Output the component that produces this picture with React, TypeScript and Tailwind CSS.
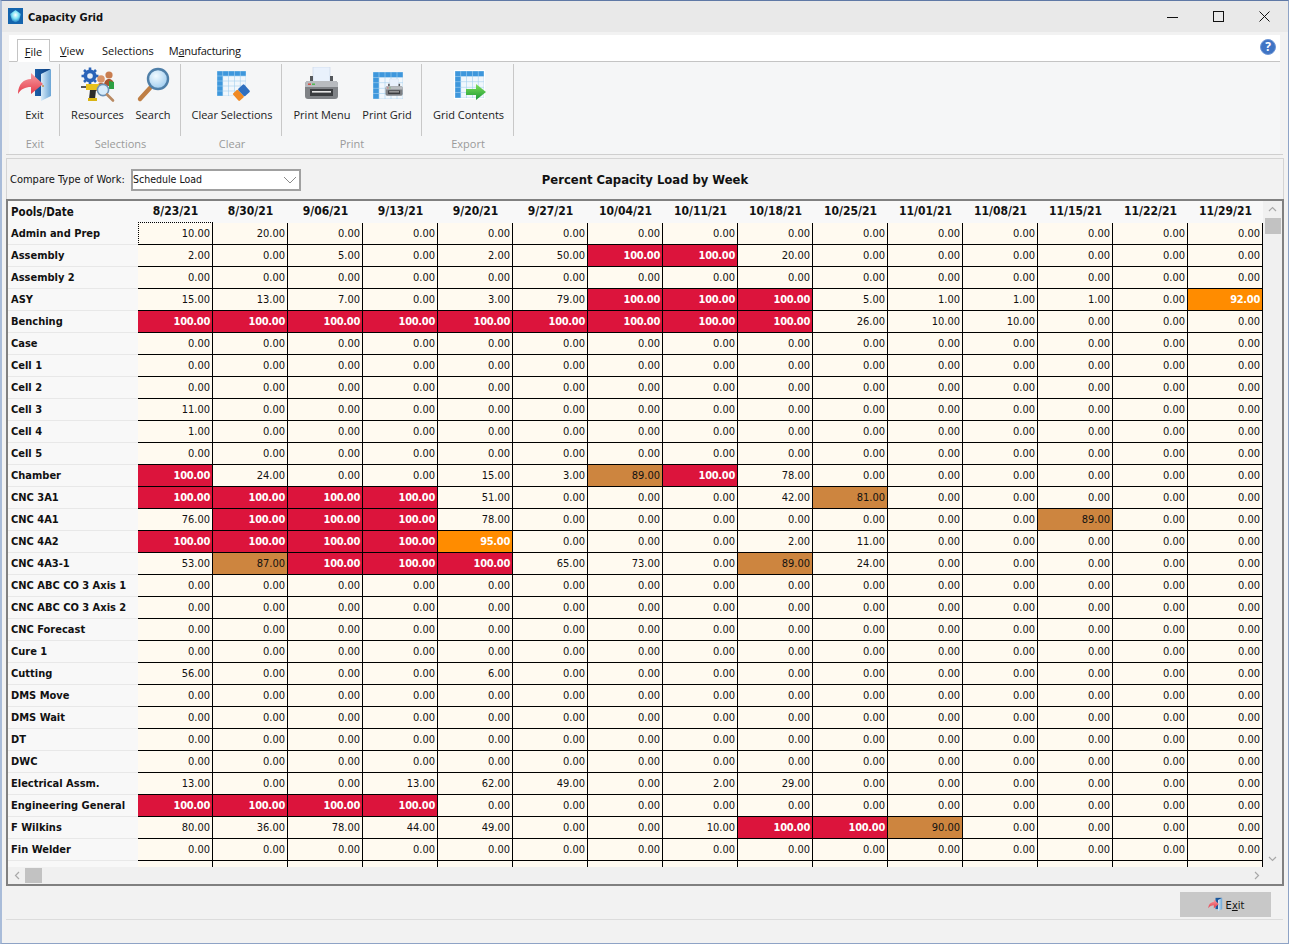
import React from "react";

const DATES = ["8/23/21","8/30/21","9/06/21","9/13/21","9/20/21","9/27/21","10/04/21","10/11/21","10/18/21","10/25/21","11/01/21","11/08/21","11/15/21","11/22/21","11/29/21"];
const Z: number[] = [];
const ROWS: [string, number[]][] = [
  ["Admin and Prep", [10,20]],
  ["Assembly", [2,0,5,0,2,50,100,100,20]],
  ["Assembly 2", Z],
  ["ASY", [15,13,7,0,3,79,100,100,100,5,1,1,1,0,92]],
  ["Benching", [100,100,100,100,100,100,100,100,100,26,10,10]],
  ["Case", Z],
  ["Cell 1", Z],
  ["Cell 2", Z],
  ["Cell 3", [11]],
  ["Cell 4", [1]],
  ["Cell 5", Z],
  ["Chamber", [100,24,0,0,15,3,89,100,78]],
  ["CNC 3A1", [100,100,100,100,51,0,0,0,42,81]],
  ["CNC 4A1", [76,100,100,100,78,0,0,0,0,0,0,0,89]],
  ["CNC 4A2", [100,100,100,100,95,0,0,0,2,11]],
  ["CNC 4A3-1", [53,87,100,100,100,65,73,0,89,24]],
  ["CNC ABC CO 3 Axis 1", Z],
  ["CNC ABC CO 3 Axis 2", Z],
  ["CNC Forecast", Z],
  ["Cure 1", Z],
  ["Cutting", [56,0,0,0,6]],
  ["DMS Move", Z],
  ["DMS Wait", Z],
  ["DT", Z],
  ["DWC", Z],
  ["Electrical Assm.", [13,0,0,13,62,49,0,2,29]],
  ["Engineering General", [100,100,100,100]],
  ["F Wilkins", [80,36,78,44,49,0,0,10,100,100,90]],
  ["Fin Welder", Z],
];

const cellTone = (v: number) => {
  if (v >= 100) return "bg-[#dc143c] text-white font-bold tracking-[-0.3px]";
  if (v > 90) return "bg-[#ff8c00] text-white font-bold tracking-[-0.3px]";
  if (v > 80) return "bg-[#cd853f] text-[#111]";
  return "bg-[#fffaf0] text-[#111]";
};

const ExitIcon = ({ s = 36, id = "a" }: { s?: number; id?: string }) => (
  <svg width={s} height={s} viewBox="0 0 36 36">
    <defs>
      <linearGradient id={"dr" + id} x1="0" y1="0" x2="1" y2="0"><stop offset="0" stopColor="#1d5fa8" /><stop offset="1" stopColor="#0d3f80" /></linearGradient>
      <linearGradient id={"dp" + id} x1="0" y1="0" x2="1" y2="0"><stop offset="0" stopColor="#d8ebf8" /><stop offset="1" stopColor="#6aa5d6" /></linearGradient>
      <linearGradient id={"ar" + id} x1="0" y1="0" x2="0" y2="1"><stop offset="0" stopColor="#f7a0a4" /><stop offset="1" stopColor="#e53b4a" /></linearGradient>
    </defs>
    <rect x="18" y="2" width="15" height="27" fill={`url(#dr${id})`} />
    <path d="M24 7 L34 2 V29 L24 34 Z" fill={`url(#dp${id})`} />
    <path d="M1 27 C1 17 7 12 14 12 V6 L26 17 L14 27 V20 C8 20 4 22 1 27 Z" fill={`url(#ar${id})`} />
    <circle cx="26" cy="19" r="0.9" fill="#c08a3a" />
  </svg>
);

const ResourcesIcon = () => (
  <svg width="36" height="36" viewBox="0 0 36 36">
    <g fill="#2a63b8">
      <circle cx="10" cy="9" r="6.5" />
      <g stroke="#2a63b8" strokeWidth="2.6">
        <path d="M10 0.5V17.5M1.5 9H18.5M4 3L16 15M16 3L4 15" />
      </g>
    </g>
    <circle cx="10" cy="9" r="2.8" fill="#e6eef8" />
    <circle cx="29" cy="8" r="3.6" fill="#c97d4f" />
    <path d="M24 19c0-5 2-7 5-7s5 2 5 7z" fill="#a8552f" />
    <path d="M29 14l5 1v7h-5z" fill="#2ea043" />
    <circle cx="21" cy="12" r="3.8" fill="#d99468" />
    <path d="M15 24c0-6 3-8 6-8s6 2 6 8z" fill="#b9663c" />
    <rect x="1" y="19" width="6" height="2" fill="#555" />
    <path d="M6 17h13v6H6z" fill="#e7c21d" />
    <path d="M10 23h6l-1 9h-6z" fill="#2c2c2c" />
    <rect x="8" y="31" width="9" height="3" fill="#d9b414" />
    <circle cx="23" cy="23" r="5.6" fill="#d7ecfb" stroke="#6d93b8" strokeWidth="1.6" />
    <path d="M27 27.5L33 33.5" stroke="#b98a62" strokeWidth="2.6" strokeLinecap="round" />
  </svg>
);

const SearchIcon = () => (
  <svg width="36" height="36" viewBox="0 0 36 36">
    <defs>
      <radialGradient id="gl" cx="0.4" cy="0.35" r="0.8"><stop offset="0" stopColor="#f2fbff" /><stop offset="1" stopColor="#8fc3ec" /></radialGradient>
    </defs>
    <path d="M5 32L15 21" stroke="#bf7f45" strokeWidth="4.4" strokeLinecap="round" />
    <circle cx="23" cy="12" r="10" fill="url(#gl)" stroke="#4f7fa8" strokeWidth="2.4" />
  </svg>
);

const Table = ({ x, y, w, h, cols = 5, rows = 5 }: { x: number; y: number; w: number; h: number; cols?: number; rows?: number }) => {
  const cw = w / cols;
  const rh = h / rows;
  const cells: React.ReactNode[] = [];
  for (let r = 0; r < rows; r++) {
    for (let c = 0; c < cols; c++) {
      const head = r === 0 || c === 0;
      cells.push(
        <rect key={r + "-" + c} x={x + c * cw + 0.3} y={y + r * rh + 0.3} width={cw - 0.6} height={rh - 0.6} fill={head ? "#3e97dc" : "#f1f7fc"} />
      );
    }
  }
  return (
    <g>
      <rect x={x} y={y} width={w} height={h} fill="#a6d0ef" />
      {cells}
    </g>
  );
};

const ClearIcon = () => (
  <svg width="36" height="36" viewBox="0 0 36 36">
    <Table x={3} y={4} w={29} h={25} />
    <g transform="rotate(-42 27 26)">
      <rect x="20" y="21" width="7" height="10" rx="1.2" fill="#f08a24" />
      <rect x="27" y="21" width="8" height="10" rx="1.2" fill="#2f6fc0" />
    </g>
  </svg>
);

const PrinterShape = ({ k = 1 }: { k?: number }) => (
  <g transform={`scale(${k})`}>
    <path d="M9 0H26V16H9Z" fill="#e9f1fc" stroke="#c8d4e6" strokeWidth="0.6" />
    <path d="M6 9H9V16H6ZM26 9H29V16H26Z" fill="#55585c" />
    <path d="M4 14H31Q34 14 34 18V29Q34 32 31 32H4Q1 32 1 29V18Q1 14 4 14Z" fill="#7f8286" />
    <path d="M1 18Q1 14 4 14H31Q34 14 34 18V20H1Z" fill="#b8bbbf" />
    <rect x="4" y="16.500" width="3" height="1.400" fill="#d84a3c" />
    <rect x="8" y="16.500" width="3" height="1.400" fill="#49b84a" />
    <rect x="6" y="22" width="23" height="7" fill="#3b3d40" />
    <rect x="8" y="24" width="19" height="1.600" fill="#e6e6e6" />
  </g>
);

const PrinterIcon = () => (
  <svg width="36" height="36" viewBox="0 0 36 36"><PrinterShape /></svg>
);

const PrintGridIcon = () => (
  <svg width="36" height="36" viewBox="0 0 36 36">
    <Table x={4} y={5} w={30} h={27} />
    <g transform="translate(16 12)"><PrinterShape k={0.52} /></g>
  </svg>
);

const ExportIcon = () => (
  <svg width="36" height="36" viewBox="0 0 36 36">
    <defs>
      <linearGradient id="gr" x1="0" y1="0" x2="0" y2="1"><stop offset="0" stopColor="#7fe05a" /><stop offset="1" stopColor="#1c9a36" /></linearGradient>
    </defs>
    <rect x="3" y="3" width="31" height="29" fill="#ffffff" />
    <Table x={4} y={4} w={29} h={27} />
    <path d="M15 22H25V17L35 25L25 33V28H15Z" fill="url(#gr)" />
  </svg>
);

const RibbonBtn = ({ w, label, icon }: { w: number; label: string; icon: React.ReactNode }) => (
  <div className="flex flex-col items-center shrink-0" style={{ width: w }}>
    <div className="h-[41px] flex items-center justify-center">{icon}</div>
    <div className="text-[11px] leading-[16px] mt-[2px] text-[#222] whitespace-nowrap">{label}</div>
  </div>
);

const Group = ({ w, pl, lp = 0, label, children }: { w: number; pl: number; lp?: number; label: string; children: React.ReactNode }) => (
  <div className="flex flex-col shrink-0 h-full" style={{ width: w }}>
    <div className="h-[74px] border-r border-[#c8c8c8] flex mt-[2px]" style={{ paddingLeft: pl }}>{children}</div>
    <div className="flex-1 flex items-center justify-center text-[11px] text-[#9a9a9a] pb-[2px]" style={{ paddingLeft: lp }}>{label}</div>
  </div>
);

const Chevron = ({ d }: { d: string }) => (
  <svg width="9" height="9" viewBox="0 0 9 9"><path d={d} fill="none" stroke="#a8a8a8" strokeWidth="1.2" /></svg>
);

export default function App() {
  const tahoma = { fontFamily: '"DejaVu Sans Condensed","DejaVu Sans",sans-serif' };
  return (
    <div className="w-[1289px] h-[944px] bg-[#f2f2f2] border-t border-t-[#5f79a6] border-b border-b-[#8ea3c6] border-l-2 border-l-[#a9bcd9] border-r border-r-[#8ea3c6] flex flex-col overflow-hidden text-[#111]" style={{ fontFamily: '"Open Sans","Noto Sans",sans-serif' }}>
      {/* title bar */}
      <div className="h-[31px] shrink-0 bg-[#e9e9e9] flex items-center">
        <div className="ml-[6px] w-[15px] h-[16px] mb-[1px] bg-[#1464ad] flex items-center justify-center">
          <svg width="15" height="16" viewBox="0 0 15 16">
            <defs><radialGradient id="tb" cx="0.5" cy="0.4" r="0.6"><stop offset="0" stopColor="#ffffff" /><stop offset="0.5" stopColor="#7fe3f5" /><stop offset="1" stopColor="#1a78c0" /></radialGradient></defs>
            <path d="M7.500 2L13 6L11 12.500L7.500 14.500L4 12.500L2 6Z" fill="url(#tb)" />
          </svg>
        </div>
        <div className="ml-[5px] mt-[3px] text-[11px] font-bold" style={tahoma}>Capacity Grid</div>
        <div className="ml-auto flex items-center h-full">
          <div className="w-[46px] flex justify-center"><svg width="11" height="11" viewBox="0 0 11 11"><path d="M0 6.500H11" stroke="#111" strokeWidth="1" /></svg></div>
          <div className="w-[46px] flex justify-center"><svg width="11" height="11" viewBox="0 0 11 11"><rect x="0.500" y="0.500" width="10" height="10" fill="none" stroke="#111" strokeWidth="1" /></svg></div>
          <div className="w-[46px] flex justify-center mr-[1px]"><svg width="11" height="11" viewBox="0 0 11 11"><path d="M0.500 0.500L10.500 10.500M10.500 0.500L0.500 10.500" stroke="#111" strokeWidth="1" /></svg></div>
        </div>
      </div>

      {/* tab strip */}
      <div className="h-[27px] shrink-0 mt-[3px] ml-[7px] w-[1271px] bg-white border-b border-[#c4c4c4] flex items-end pl-[8px] relative text-[11px]">
        <div className="h-[23px] w-[33px] border border-[#c4c4c4] border-b-white -mb-[1px] bg-white flex items-center justify-center pt-[3px]"><span><u>F</u>ile</span></div>
        <div className="h-[22px] ml-[10px] flex items-center pt-[2px]"><span><u>V</u>iew</span></div>
        <div className="h-[22px] ml-[18px] flex items-center pt-[2px]"><span>Selections</span></div>
        <div className="h-[22px] ml-[15px] flex items-center pt-[2px] tracking-[-0.25px]"><span>M<u>a</u>nufacturing</span></div>
        <div className="absolute right-[4px] top-[4px] w-[16px] h-[16px] rounded-full bg-[#3f74c4] border border-[#6f97d6] text-white text-[12px] font-bold flex items-center justify-center leading-none">?</div>
      </div>

      {/* ribbon */}
      <div className="h-[92px] shrink-0 ml-[7px] w-[1271px] bg-[#f5f6f7] flex pl-[1px]">
        <Group w={50} pl={0} label="Exit"><RibbonBtn w={49} label="Exit" icon={<ExitIcon />} /></Group>
        <Group w={121} pl={6} lp={0} label="Selections">
          <RibbonBtn w={63} label="Resources" icon={<ResourcesIcon />} />
          <RibbonBtn w={48} label="Search" icon={<SearchIcon />} />
        </Group>
        <Group w={101} pl={1} lp={1} label="Clear"><RibbonBtn w={100} label="Clear Selections" icon={<ClearIcon />} /></Group>
        <Group w={140} pl={7} label="Print">
          <RibbonBtn w={66} label="Print Menu" icon={<PrinterIcon />} />
          <RibbonBtn w={64} label="Print Grid" icon={<PrintGridIcon />} />
        </Group>
        <Group w={92} pl={1} lp={0} label="Export"><RibbonBtn w={91} label="Grid Contents" icon={<ExportIcon />} /></Group>
      </div>
      <div className="h-[1px] shrink-0 ml-[4px] w-[1277px] bg-[#cfcfcf]" />

      {/* selector panel */}
      <div className="h-[41px] shrink-0 mt-[3px] ml-[4px] w-[1278px] border border-[#d4d4d4] border-b-0 bg-[#f2f2f2] flex items-center relative">
        <span className="ml-[3px] mt-[2px] text-[11px] whitespace-nowrap" style={tahoma}>Compare Type of Work:</span>
        <div className="absolute left-[124px] top-[10px] w-[170px] h-[22px] border-2 border-[#a0a0a0] bg-white flex items-center text-[10.5px]" style={tahoma}>
          Schedule Load
          <svg className="absolute right-[2px] top-[4px]" width="14" height="10" viewBox="0 0 14 10"><path d="M1 2L7 8L13 2" fill="none" stroke="#8a8a8a" strokeWidth="1" /></svg>
        </div>
        <div className="absolute left-0 right-0 top-[11px] text-center text-[12.9px] font-bold" style={tahoma}>Percent Capacity Load by Week</div>
      </div>

      {/* grid */}
      <div className="h-[687px] shrink-0 ml-[4px] w-[1278px] border-2 border-[#808080] flex flex-col bg-[#f2f2f2] text-[11px]" style={tahoma}>
        <div className="flex h-[666px] shrink-0 overflow-hidden">
          <div className="w-[1255px] shrink-0 overflow-hidden">
            <div className="flex h-[22px] bg-[#f8f8f8]">
              <div className="w-[130px] shrink-0 pl-[3px] pt-[1px] flex items-center font-bold text-[11.5px]">Pools/Date</div>
              {DATES.map((d) => (
                <div key={d} className="w-[75px] shrink-0 flex items-center justify-center pb-[2px] font-bold text-[12px]">{d}</div>
              ))}
            </div>
            {ROWS.map(([name, vals], r) => (
              <div key={name} className="flex h-[22px]">
                <div className="w-[130px] shrink-0 pl-[3px] pt-[2px] flex items-center font-bold bg-[#f8f8f8] border-b border-[#e8e8e8] whitespace-nowrap">{name}</div>
                {DATES.map((d, c) => {
                  const v = vals[c] ?? 0;
                  const focus = r === 0 && c === 0;
                  return (
                    <div key={d} className={`w-[75px] shrink-0 flex items-center justify-end pr-[2px] pt-[2px] relative border-r border-b border-black ${cellTone(v)}`}>
                      {v.toFixed(2)}
                      {focus && <div className="absolute -left-[0px] -top-[1px] -right-[1px] -bottom-[1px] border border-dotted border-black" />}
                    </div>
                  );
                })}
              </div>
            ))}
            <div className="flex h-[22px]">
              <div className="w-[130px] shrink-0 bg-[#f8f8f8]" />
              {DATES.map((d) => (
                <div key={d} className="w-[75px] shrink-0 bg-[#fffaf0] border-r border-black" />
              ))}
            </div>
          </div>
          <div className="w-[19px] shrink-0 bg-[#f0f0f0] flex flex-col items-center relative">
            <div className="h-[17px] flex items-center"><Chevron d="M1 6L4.500 2.500L8 6" /></div>
            <div className="w-[16px] h-[16px] bg-[#c2c2c2]" />
            <div className="absolute bottom-[4px]"><Chevron d="M1 3L4.500 6.500L8 3" /></div>
          </div>
        </div>
        <div className="flex-1 flex items-center bg-[#f0f0f0] pl-[5px] pr-[21px]">
          <Chevron d="M6 1L2.500 4.500L6 8" />
          <div className="ml-[3px] w-[17px] h-[15px] bg-[#c2c2c2]" />
          <div className="ml-auto"><Chevron d="M3 1L6.500 4.500L3 8" /></div>
        </div>
      </div>

      {/* footer */}
      <div className="flex-1 relative">
        <div className="flex justify-end pr-[17px] pt-[6px]">
          <div className="w-[91px] h-[25px] bg-[#c8c8c8] flex items-center justify-center text-[11px] pl-[1px]" style={tahoma}>
            <ExitIcon s={15} id="b" />
            <span className="ml-[3px] mt-[3px]">E<u>x</u>it</span>
          </div>
        </div>
        <div className="mt-[2px] ml-[4px] w-[1277px] h-[1px] bg-[#dcdcdc]" />
      </div>
    </div>
  );
}
